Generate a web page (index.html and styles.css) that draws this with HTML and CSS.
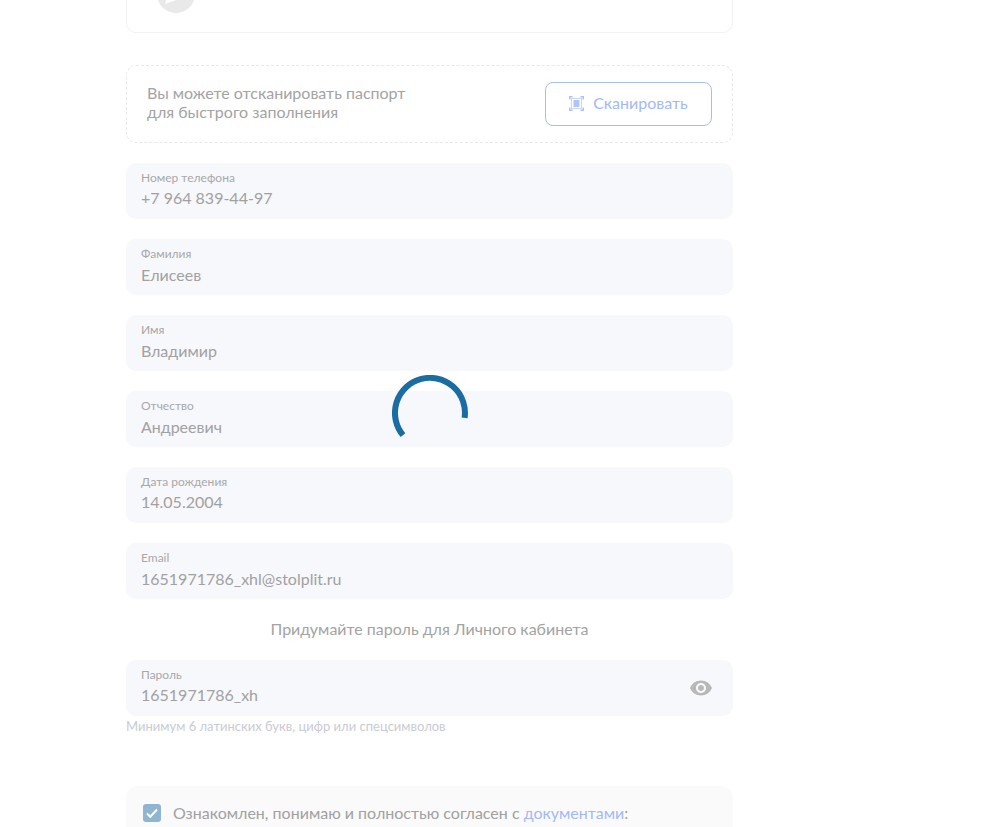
FILE: index.html
```html
<!DOCTYPE html>
<html lang="ru">
<head>
<meta charset="utf-8">
<title>Регистрация</title>
<link rel="stylesheet" href="styles.css">
</head>
<body>
<main class="form">
  <section class="top-card">
    <span class="avatar"><svg viewBox="0 0 38 38" width="38" height="38"><path class="avatar-mark" d="M8 29L28 22 14 6z"/></svg></span>
    <span class="top-text">Страница фото</span>
  </section>
  <section class="scan">
    <p class="scan-text">Вы можете отсканировать паспорт<br>для быстрого заполнения</p>
    <button class="scan-btn" type="button">
      <svg class="scan-icon" viewBox="0 0 15 15" width="15" height="15" fill="none">
        <path class="scan-corner" d="M.75 3.500V.75H3.500M11.500.75h2.750V3.500M14.250 11.500v2.750H11.500M3.500 14.250H.75V11.500"/>
        <rect class="scan-frame" x="2.500" y="2.500" width="10" height="10"/>
        <rect class="scan-core" x="4.500" y="4" width="6" height="7"/>
      </svg>
      Сканировать
    </button>
  </section>
  <div class="field"><label>Номер телефона</label><span class="value">+7 964 839-44-97</span></div>
  <div class="field"><label>Фамилия</label><span class="value value-low">Елисеев</span></div>
  <div class="field"><label>Имя</label><span class="value value-low">Владимир</span></div>
  <div class="field"><label>Отчество</label><span class="value value-low">Андреевич</span></div>
  <div class="field"><label>Дата рождения</label><span class="value">14.05.2004</span></div>
  <div class="field"><label>Email</label><span class="value value-low">1651971786_xhl@stolplit.ru</span></div>
  <p class="pass-title">Придумайте пароль для Личного кабинета</p>
  <div class="field field-pass">
    <label>Пароль</label><span class="value">1651971786_xh</span>
    <svg class="eye" viewBox="0 0 24 24" width="24" height="24"><path d="M12 4.500C7 4.500 2.730 7.610 1 12c1.730 4.390 6 7.500 11 7.500s9.270-3.110 11-7.500c-1.730-4.390-6-7.500-11-7.500zM12 17c-2.760 0-5-2.240-5-5s2.240-5 5-5 5 2.240 5 5-2.240 5-5 5zm0-8c-1.660 0-3 1.340-3 3s1.340 3 3 3 3-1.340 3-3-1.340-3-3-3z"/></svg>
  </div>
  <p class="hint">Минимум 6 латинских букв, цифр или спецсимволов</p>
  <section class="agree">
    <span class="check"><svg viewBox="0 0 18 18" width="18" height="18" fill="none"><path d="M4 9.500l3.300 3.200L14 5.500"/></svg></span>
    <span class="agree-text">Ознакомлен, понимаю и полностью согласен с <a href="#">документами</a>:</span>
  </section>
</main>
<svg class="spinner" viewBox="0 0 76 76" width="76" height="76" fill="none"><path d="M72.600 42.900A35 35 0 1 0 11 60.200"/></svg>
</body>
</html>
```
FILE: styles.css
```css
* { box-sizing: border-box; }
html, body { height: 100%; }
body {
  margin: 0;
  overflow: hidden;
  background: #fff;
  font-family: Lato, "Open Sans", sans-serif;
  color: #a3a3a3;
}
.form { width: 607px; margin: -60px 0 0 126px; }
.top-card {
  height: 93px;
  border: 1px solid #f2f2f2;
  border-radius: 10px;
  padding: 34px 0 0 30px;
  display: flex;
  align-items: flex-start;
  gap: 142px;
}
.avatar { width: 38px; height: 38px; border-radius: 50%; background: #e9e9e9; flex: none; }
.avatar-mark { fill: #fff; }
.top-text { font-size: 16px; line-height: 20px; color: #8c8c8c; margin-top: 5px; }
.scan {
  height: 78px;
  margin-top: 32px;
  border: 1px dashed #e8e8e8;
  border-radius: 10px;
  display: flex;
  align-items: center;
  justify-content: space-between;
  padding: 0 20px;
}
.scan-text { margin: -4px 0 0; font-size: 16px; line-height: 19px; color: #a3a3a3; }
.scan-btn {
  width: 167px;
  height: 44px;
  border: 1px solid #a6bdf5;
  border-radius: 8px;
  background: #fff;
  color: #a3b9f7;
  font: 16px Lato, "Open Sans", sans-serif;
  display: flex;
  align-items: center;
  justify-content: center;
  gap: 9px;
  padding: 0 0 4px;
}
.scan-icon { margin-top: 2px; }
.scan-corner { stroke: #aec2f8; stroke-width: 1.500; }
.scan-frame { stroke: #c8d6fb; }
.scan-core { fill: #b0c4f8; }
.field {
  position: relative;
  height: 56px;
  margin-top: 20px;
  padding: 7px 15px 0;
  background: #f7f8fc;
  border-radius: 10px;
  display: flex;
  flex-direction: column;
}
.field label { font-size: 12px; line-height: 15px; color: #a8a8a8; }
.value { font-size: 16px; line-height: 20px; margin-top: 3px; color: #a1a1a1; }
.value-low { margin-top: 4px; }
.pass-title { margin: 19px 0 0; height: 21px; text-align: center; font-size: 16px; line-height: 21px; color: #a3a3a3; }
.field-pass { margin-top: 21px; }
.eye { position: absolute; right: 20px; top: 16px; fill: #b8b8b8; }
.hint { margin: 3px 0 0; font-size: 13px; line-height: 15px; color: #c9cbd3; }
.agree {
  margin-top: 52px;
  height: 80px;
  padding: 18px 17px;
  background: #fafafa;
  border-radius: 12px;
  display: flex;
  align-items: flex-start;
  gap: 12px;
}
.check { width: 18px; height: 18px; border-radius: 3px; background: #8fb5d1; flex: none; }
.check path { stroke: #fff; stroke-width: 2; }
.agree-text { font-size: 16px; line-height: 18px; color: #a1a1a1; }
.agree-text a { color: #a3b9f7; text-decoration: none; }
.spinner { position: absolute; left: 392px; top: 375px; }
.spinner path { stroke: #1a6ca3; stroke-width: 6; }
```
